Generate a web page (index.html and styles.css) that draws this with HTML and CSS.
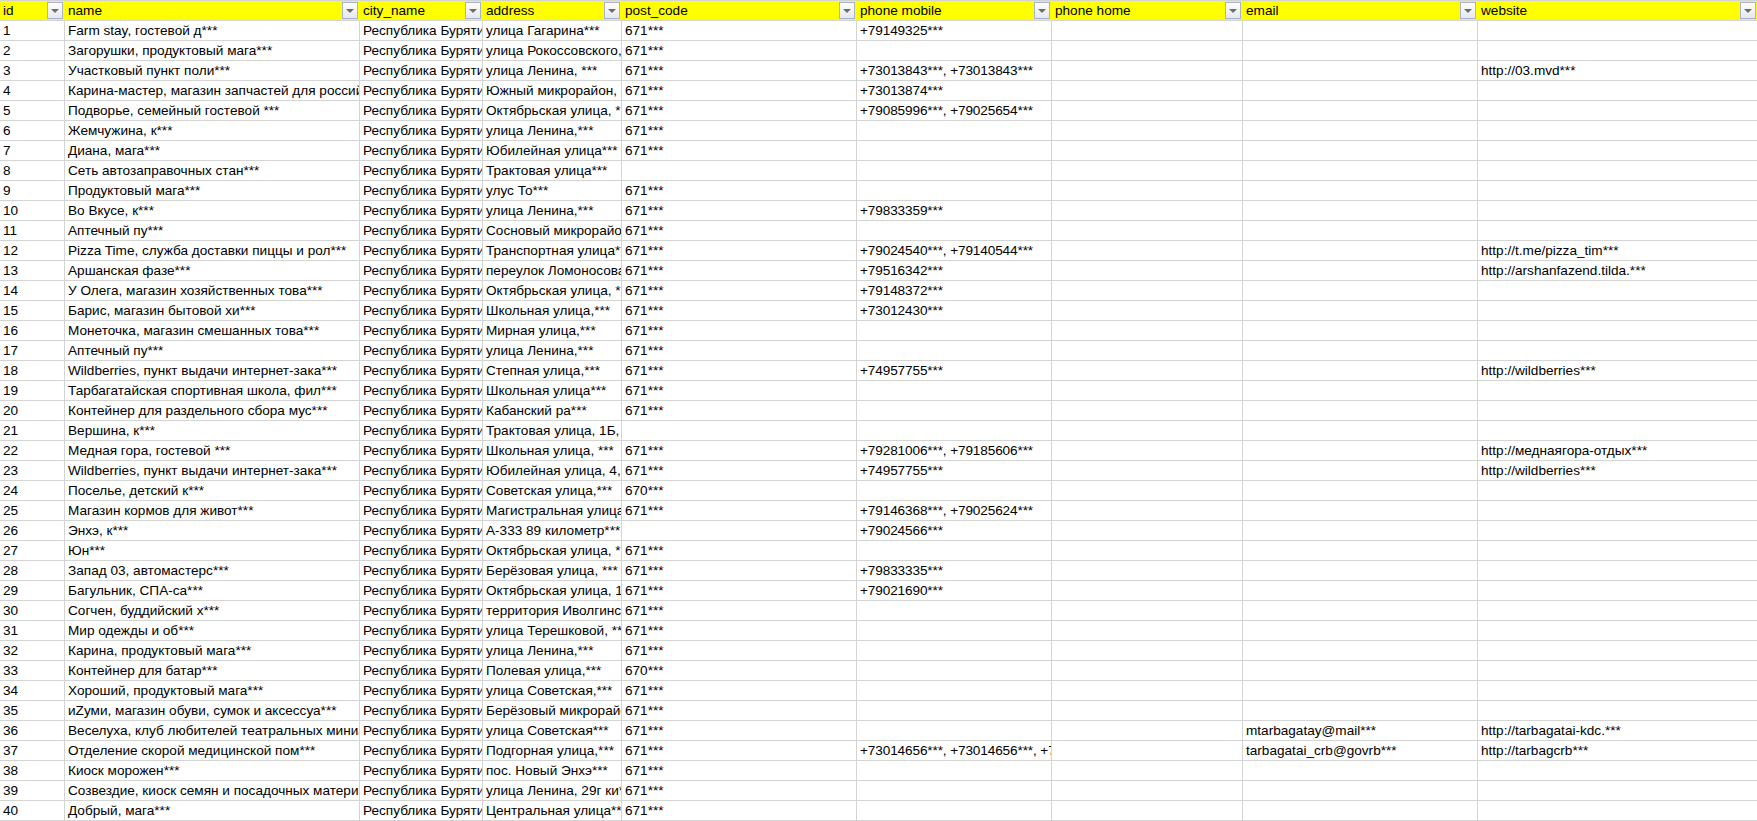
FILE: index.html
```html
<!DOCTYPE html>
<html lang="ru">
<head>
<meta charset="utf-8">
<title>Sheet</title>
<link rel="stylesheet" href="styles.css">
</head>
<body>
<table class="sheet">
<colgroup><col class="c-id"><col class="c-name"><col class="c-city"><col class="c-addr"><col class="c-post"><col class="c-mob"><col class="c-home"><col class="c-email"><col class="c-web"></colgroup>
<thead><tr>
<th><div class="hd"><span>id</span><i class="fb"></i></div></th>
<th><div class="hd"><span>name</span><i class="fb"></i></div></th>
<th><div class="hd"><span>city_name</span><i class="fb"></i></div></th>
<th><div class="hd"><span>address</span><i class="fb"></i></div></th>
<th><div class="hd"><span>post_code</span><i class="fb"></i></div></th>
<th><div class="hd"><span>phone mobile</span><i class="fb"></i></div></th>
<th><div class="hd"><span>phone home</span><i class="fb"></i></div></th>
<th><div class="hd"><span>email</span><i class="fb"></i></div></th>
<th><div class="hd"><span>website</span><i class="fb"></i></div></th>
</tr></thead>
<tbody>
<tr><td>1</td><td>Farm stay, гостевой д***</td><td>Республика Бурятия</td><td>улица Гагарина***</td><td>671***</td><td>+79149325***</td><td></td><td></td><td></td></tr>
<tr><td>2</td><td>Загорушки, продуктовый мага***</td><td>Республика Бурятия</td><td>улица Рокоссовского, 1</td><td>671***</td><td></td><td></td><td></td><td></td></tr>
<tr><td>3</td><td>Участковый пункт поли***</td><td>Республика Бурятия</td><td>улица Ленина, ***</td><td>671***</td><td>+73013843***, +73013843***</td><td></td><td></td><td>http://03.mvd***</td></tr>
<tr><td>4</td><td>Карина-мастер, магазин запчастей для российских</td><td>Республика Бурятия</td><td>Южный микрорайон, 1</td><td>671***</td><td>+73013874***</td><td></td><td></td><td></td></tr>
<tr><td>5</td><td>Подворье, семейный гостевой ***</td><td>Республика Бурятия</td><td>Октябрьская улица, ***</td><td>671***</td><td>+79085996***, +79025654***</td><td></td><td></td><td></td></tr>
<tr><td>6</td><td>Жемчужина, к***</td><td>Республика Бурятия</td><td>улица Ленина,***</td><td>671***</td><td></td><td></td><td></td><td></td></tr>
<tr><td>7</td><td>Диана, мага***</td><td>Республика Бурятия</td><td>Юбилейная улица***</td><td>671***</td><td></td><td></td><td></td><td></td></tr>
<tr><td>8</td><td>Сеть автозаправочных стан***</td><td>Республика Бурятия</td><td>Трактовая улица***</td><td></td><td></td><td></td><td></td><td></td></tr>
<tr><td>9</td><td>Продуктовый мага***</td><td>Республика Бурятия</td><td>улус То***</td><td>671***</td><td></td><td></td><td></td><td></td></tr>
<tr><td>10</td><td>Во Вкусе, к***</td><td>Республика Бурятия</td><td>улица Ленина,***</td><td>671***</td><td>+79833359***</td><td></td><td></td><td></td></tr>
<tr><td>11</td><td>Аптечный пу***</td><td>Республика Бурятия</td><td>Сосновый микрорайон</td><td>671***</td><td></td><td></td><td></td><td></td></tr>
<tr><td>12</td><td>Pizza Time, служба доставки пиццы и рол***</td><td>Республика Бурятия</td><td>Транспортная улица***</td><td>671***</td><td>+79024540***, +79140544***</td><td></td><td></td><td>http://t.me/pizza_tim***</td></tr>
<tr><td>13</td><td>Аршанская фазе***</td><td>Республика Бурятия</td><td>переулок Ломоносова</td><td>671***</td><td>+79516342***</td><td></td><td></td><td>http://arshanfazend.tilda.***</td></tr>
<tr><td>14</td><td>У Олега, магазин хозяйственных това***</td><td>Республика Бурятия</td><td>Октябрьская улица, ***</td><td>671***</td><td>+79148372***</td><td></td><td></td><td></td></tr>
<tr><td>15</td><td>Барис, магазин бытовой хи***</td><td>Республика Бурятия</td><td>Школьная улица,***</td><td>671***</td><td>+73012430***</td><td></td><td></td><td></td></tr>
<tr><td>16</td><td>Монеточка, магазин смешанных това***</td><td>Республика Бурятия</td><td>Мирная улица,***</td><td>671***</td><td></td><td></td><td></td><td></td></tr>
<tr><td>17</td><td>Аптечный пу***</td><td>Республика Бурятия</td><td>улица Ленина,***</td><td>671***</td><td></td><td></td><td></td><td></td></tr>
<tr><td>18</td><td>Wildberries, пункт выдачи интернет-зака***</td><td>Республика Бурятия</td><td>Степная улица,***</td><td>671***</td><td>+74957755***</td><td></td><td></td><td>http://wildberries***</td></tr>
<tr><td>19</td><td>Тарбагатайская спортивная школа, фил***</td><td>Республика Бурятия</td><td>Школьная улица***</td><td>671***</td><td></td><td></td><td></td><td></td></tr>
<tr><td>20</td><td>Контейнер для раздельного сбора мус***</td><td>Республика Бурятия</td><td>Кабанский ра***</td><td>671***</td><td></td><td></td><td></td><td></td></tr>
<tr><td>21</td><td>Вершина, к***</td><td>Республика Бурятия</td><td>Трактовая улица, 1Б, 1***</td><td></td><td></td><td></td><td></td><td></td></tr>
<tr><td>22</td><td>Медная гора, гостевой ***</td><td>Республика Бурятия</td><td>Школьная улица, ***</td><td>671***</td><td>+79281006***, +79185606***</td><td></td><td></td><td>http://меднаягора-отдых***</td></tr>
<tr><td>23</td><td>Wildberries, пункт выдачи интернет-зака***</td><td>Республика Бурятия</td><td>Юбилейная улица, 4, ***</td><td>671***</td><td>+74957755***</td><td></td><td></td><td>http://wildberries***</td></tr>
<tr><td>24</td><td>Поселье, детский к***</td><td>Республика Бурятия</td><td>Советская улица,***</td><td>670***</td><td></td><td></td><td></td><td></td></tr>
<tr><td>25</td><td>Магазин кормов для живот***</td><td>Республика Бурятия</td><td>Магистральная улица***</td><td>671***</td><td>+79146368***, +79025624***</td><td></td><td></td><td></td></tr>
<tr><td>26</td><td>Энхэ, к***</td><td>Республика Бурятия</td><td>А-333 89 километр***</td><td></td><td>+79024566***</td><td></td><td></td><td></td></tr>
<tr><td>27</td><td>Юн***</td><td>Республика Бурятия</td><td>Октябрьская улица, ***</td><td>671***</td><td></td><td></td><td></td><td></td></tr>
<tr><td>28</td><td>Запад 03, автомастерс***</td><td>Республика Бурятия</td><td>Берёзовая улица, ***</td><td>671***</td><td>+79833335***</td><td></td><td></td><td></td></tr>
<tr><td>29</td><td>Багульник, СПА-са***</td><td>Республика Бурятия</td><td>Октябрьская улица, 1***</td><td>671***</td><td>+79021690***</td><td></td><td></td><td></td></tr>
<tr><td>30</td><td>Согчен, буддийский х***</td><td>Республика Бурятия</td><td>территория Иволгинского</td><td>671***</td><td></td><td></td><td></td><td></td></tr>
<tr><td>31</td><td>Мир одежды и об***</td><td>Республика Бурятия</td><td>улица Терешковой, ***</td><td>671***</td><td></td><td></td><td></td><td></td></tr>
<tr><td>32</td><td>Карина, продуктовый мага***</td><td>Республика Бурятия</td><td>улица Ленина,***</td><td>671***</td><td></td><td></td><td></td><td></td></tr>
<tr><td>33</td><td>Контейнер для батар***</td><td>Республика Бурятия</td><td>Полевая улица,***</td><td>670***</td><td></td><td></td><td></td><td></td></tr>
<tr><td>34</td><td>Хороший, продуктовый мага***</td><td>Республика Бурятия</td><td>улица Советская,***</td><td>671***</td><td></td><td></td><td></td><td></td></tr>
<tr><td>35</td><td>иZуми, магазин обуви, сумок и аксессуа***</td><td>Республика Бурятия</td><td>Берёзовый микрорайон</td><td>671***</td><td></td><td></td><td></td><td></td></tr>
<tr><td>36</td><td>Веселуха, клуб любителей театральных миниатюр</td><td>Республика Бурятия</td><td>улица Советская***</td><td>671***</td><td></td><td></td><td>mtarbagatay@mail***</td><td>http://tarbagatai-kdc.***</td></tr>
<tr><td>37</td><td>Отделение скорой медицинской пом***</td><td>Республика Бурятия</td><td>Подгорная улица,***</td><td>671***</td><td>+73014656***, +73014656***, +73014656***</td><td></td><td>tarbagatai_crb@govrb***</td><td>http://tarbagcrb***</td></tr>
<tr><td>38</td><td>Киоск морожен***</td><td>Республика Бурятия</td><td>пос. Новый Энхэ***</td><td>671***</td><td></td><td></td><td></td><td></td></tr>
<tr><td>39</td><td>Созвездие, киоск семян и посадочных материалов</td><td>Республика Бурятия</td><td>улица Ленина, 29г ки***</td><td>671***</td><td></td><td></td><td></td><td></td></tr>
<tr><td>40</td><td>Добрый, мага***</td><td>Республика Бурятия</td><td>Центральная улица***</td><td>671***</td><td></td><td></td><td></td><td></td></tr>
</tbody>
</table>
</body>
</html>
```
FILE: styles.css
```css
html, body {
  margin: 0;
  padding: 0;
  background: #fff;
  overflow: hidden;
}
.sheet {
  width: 1757px;
  table-layout: fixed;
  border-collapse: separate;
  border-spacing: 0;
  font-family: "Liberation Sans", Arial, sans-serif;
  font-size: 13.6px;
  color: #000;
}
.c-id { width: 65px; }
.c-name { width: 295px; }
.c-city { width: 123px; }
.c-addr { width: 139px; }
.c-post { width: 235px; }
.c-mob { width: 195px; }
.c-home { width: 191px; }
.c-email { width: 235px; }
.c-web { width: 279px; }
th, td {
  box-sizing: border-box;
  padding: 0 0 0 3px;
  border-right: 1px solid #d4d4d4;
  border-bottom: 1px solid #d4d4d4;
  white-space: nowrap;
  overflow: hidden;
  text-align: left;
  font-weight: 400;
}
td { height: 20px; line-height: 19px; }
td:nth-child(6) { letter-spacing: -0.12px; }
th {
  height: 21px;
  line-height: 19px;
  background: #ffff00;
  border-top: 1px solid #d4d4d4;
  border-right-color: #ffff00;
  padding-right: 1px;
}
th:last-child, td:last-child { border-right: 0; }
.hd {
  display: flex;
  align-items: center;
  justify-content: space-between;
  height: 19px;
}
.fb {
  position: relative;
  flex: none;
  box-sizing: border-box;
  width: 16px;
  height: 17px;
  border: 1px solid #a9b3cb;
  background: linear-gradient(#ffffff, #e4e7ee);
}
.fb::after {
  content: "";
  position: absolute;
  left: 3px;
  top: 6px;
  border-left: 4px solid transparent;
  border-right: 4px solid transparent;
  border-top: 4px solid #6d6d6d;
}
```
